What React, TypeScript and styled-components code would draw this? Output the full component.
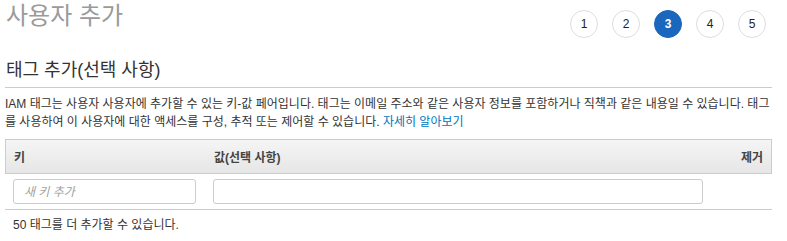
import React from "react";
import styled, { createGlobalStyle } from "styled-components";

const Global = createGlobalStyle`
  body {
    margin: 0;
    background: #fff;
    font-family: "Liberation Sans", "Noto Sans CJK KR", sans-serif;
    color: #333;
  }
  * { box-sizing: border-box; }
`;

const Page = styled.div`
  width: 767px;
  margin-left: 5px;
`;

const TopRow = styled.div`
  display: flex;
  justify-content: space-between;
  align-items: flex-start;
  height: 58px;
`;

const Title = styled.h1`
  margin: 0;
  padding-left: 1px;
  font-size: 24px;
  line-height: 32px;
  font-weight: 400;
  color: #9a9a9a;
`;

const Steps = styled.div`
  display: flex;
  gap: 14px;
  margin-top: 10px;
  margin-right: 6px;
`;

const Step = styled.div<{ $active?: boolean }>`
  width: 28px;
  height: 28px;
  border-radius: 50%;
  display: flex;
  align-items: center;
  justify-content: center;
  font-family: "Liberation Sans", Arial, sans-serif;
  font-size: 12px;
  font-weight: ${(p) => (p.$active ? 700 : 400)};
  color: ${(p) => (p.$active ? "#fff" : "#222")};
  background: ${(p) => (p.$active ? "#1a67bd" : "#fff")};
  border: 1px solid ${(p) => (p.$active ? "#1a67bd" : "#dddddd")};
`;

const Heading = styled.h2`
  margin: 0;
  padding: 0 0 4px 1px;
  font-size: 18px;
  line-height: 25px;
  font-weight: 400;
  color: #333;
  border-bottom: 1px solid #cccccc;
`;

const Description = styled.p`
  margin: 7px 0 0;
  font-size: 12px;
  line-height: 18px;
  color: #333;
`;

const Link = styled.a`
  color: #0073bb;
  text-decoration: none;
`;

const Table = styled.div`
  margin-top: 8px;
`;

const HeaderRow = styled.div`
  display: grid;
  grid-template-columns: 200px 490px 1fr;
  align-items: center;
  height: 35px;
  padding: 0 8px 0 8px;
  border: 1px solid #cccccc;
  background: linear-gradient(#f5f5f5, #e6e6e6);
  font-size: 12px;
  font-weight: 700;
  color: #444;
`;

const HeadCell = styled.div<{ $right?: boolean }>`
  text-align: ${(p) => (p.$right ? "right" : "left")};
`;

const InputRow = styled.div`
  display: grid;
  grid-template-columns: 200px 490px 1fr;
  align-items: center;
  padding: 5px 8px;
  border-bottom: 1px solid #cccccc;
`;

const TextInput = styled.input<{ $w: number }>`
  width: ${(p) => p.$w}px;
  height: 25px;
  border: 1px solid #cccccc;
  border-radius: 3px;
  padding: 0 10px;
  font-family: "Liberation Sans", "Noto Sans CJK KR", sans-serif;
  font-size: 12px;
  outline: none;
  &::placeholder {
    color: #a0a0a0;
    font-style: italic;
  }
`;

const Footer = styled.p`
  margin: 6px 0 0;
  padding-left: 8px;
  font-size: 12px;
  line-height: 18px;
  color: #333;
`;

export default function App() {
  return (
    <>
      <Global />
      <Page>
        <TopRow>
          <Title>사용자 추가</Title>
          <Steps>
            {[1, 2, 3, 4, 5].map((n) => (
              <Step key={n} $active={n === 3}>
                {n}
              </Step>
            ))}
          </Steps>
        </TopRow>
        <Heading>태그 추가(선택 사항)</Heading>
        <Description>
          IAM 태그는 사용자 사용자에 추가할 수 있는 키-값 페어입니다. 태그는 이메일 주소와 같은 사용자 정보를 포함하거나 직책과 같은 내용일 수 있습니다. 태그를 사용하여 이 사용자에 대한 액세스를 구성, 추적 또는 제어할 수 있습니다.{" "}
          <Link href="#">자세히 알아보기</Link>
        </Description>
        <Table>
          <HeaderRow>
            <HeadCell>키</HeadCell>
            <HeadCell>값(선택 사항)</HeadCell>
            <HeadCell $right>제거</HeadCell>
          </HeaderRow>
          <InputRow>
            <TextInput $w={183} placeholder="새 키 추가" />
            <TextInput $w={490} />
            <div />
          </InputRow>
        </Table>
        <Footer>50 태그를 더 추가할 수 있습니다.</Footer>
      </Page>
    </>
  );
}
